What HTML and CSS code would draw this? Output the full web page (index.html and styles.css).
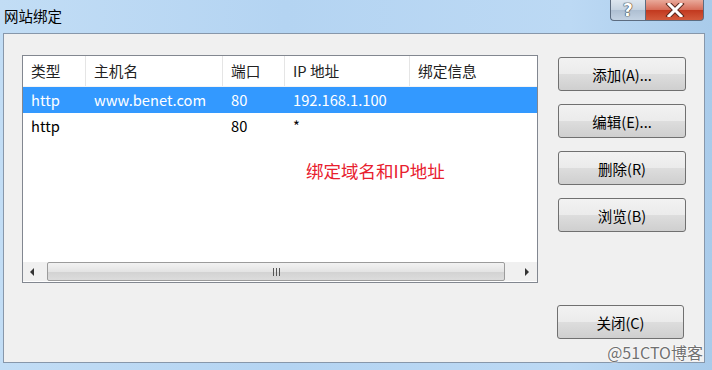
FILE: index.html
```html
<!DOCTYPE html>
<html lang="zh-cn">
<head>
    <meta charset="UTF-8">
    <title>网站绑定</title>
    <link rel="stylesheet" href="styles.css">
</head>
<body>
    <div class="janela">
        <div class="titulo">
            <span class="texto-titulo">网站绑定</span>
            <div class="controles">
                <div class="btn-ajuda">?</div>
                <div class="btn-fechar">
                    <svg width="22" height="14" viewBox="0 0 22 14">
                        <path d="M5 1 L17 13 M17 1 L5 13" stroke="#5a2a20" stroke-width="5" stroke-linecap="square"/>
                        <path d="M5 1 L17 13 M17 1 L5 13" stroke="#ffffff" stroke-width="3" stroke-linecap="square"/>
                    </svg>
                </div>
            </div>
        </div>
        <div class="cliente">
            <div class="lista">
                <div class="cabecalho">
                    <div class="col c1">类型</div>
                    <div class="col c2">主机名</div>
                    <div class="col c3">端口</div>
                    <div class="col c4">IP 地址</div>
                    <div class="col c5">绑定信息</div>
                </div>
                <div class="linha selecionada">
                    <div class="col c1">http</div>
                    <div class="col c2">www.benet.com</div>
                    <div class="col c3">80</div>
                    <div class="col c4">192.168.1.100</div>
                    <div class="col c5"></div>
                </div>
                <div class="linha">
                    <div class="col c1">http</div>
                    <div class="col c2"></div>
                    <div class="col c3">80</div>
                    <div class="col c4">*</div>
                    <div class="col c5"></div>
                </div>
                <div class="corpo">
                    <span class="nota">绑定域名和IP地址</span>
                </div>
                <div class="rolagem">
                    <div class="seta esq">
                        <svg width="6" height="8" viewBox="0 0 6 8"><path d="M5 0 L1 4 L5 8 Z" fill="#333"/></svg>
                    </div>
                    <div class="trilho">
                        <div class="polegar"><span class="grip"></span></div>
                    </div>
                    <div class="seta dir">
                        <svg width="6" height="8" viewBox="0 0 6 8"><path d="M1 0 L5 4 L1 8 Z" fill="#333"/></svg>
                    </div>
                </div>
            </div>
            <div class="botoes">
                <button>添加(A)...</button>
                <button>编辑(E)...</button>
                <button>删除(R)</button>
                <button>浏览(B)</button>
                <button class="fechar">关闭(C)</button>
            </div>
        </div>
        <span class="marca">@51CTO博客</span>
    </div>
</body>
</html>
```

FILE: styles.css
```css
*{
    box-sizing: border-box;
    margin: 0;
    padding: 0;
}
body{
    width: 712px;
    height: 370px;
    overflow: hidden;
    background: linear-gradient(90deg, #c2ddf5, #b4d4f2 40%, #bcd9f4 80%, #a9cbea);
    font-family: "Noto Sans CJK SC", "Noto Sans", sans-serif;
}
.janela{
    position: relative;
    width: 712px;
    height: 370px;
}
.titulo{
    height: 33px;
    display: flex;
    justify-content: space-between;
    align-items: flex-start;
    padding-left: 4px;
}
.texto-titulo{
    font-size: 14.5px;
    line-height: 14px;
    margin-top: 9px;
    color: #000;
}
.controles{
    display: flex;
    margin-right: 8px;
}
.btn-ajuda, .btn-fechar{
    height: 21px;
    border: 1px solid #5c6c80;
    border-top: none;
    display: flex;
    align-items: center;
    justify-content: center;
}
.btn-ajuda{
    width: 35px;
    border-radius: 0 0 0 4px;
    border-right: none;
    background: linear-gradient(#dde6ef, #c5d3e1 50%, #aebfd2 51%, #c3d2e2);
    color: #fff;
    font-family: "DejaVu Sans", sans-serif;
    font-weight: bold;
    font-size: 17px;
    text-shadow: 0 0 1px #333, 0 0 1px #333, 0 0 1px #333;
}
.btn-fechar{
    width: 59px;
    border-radius: 0 0 4px 0;
    background: linear-gradient(#e9a99a, #d66c58 50%, #c2391f 51%, #d35a3c);
}
.cliente{
    margin-left: 3px;
    width: 702px;
    height: 330px;
    border: 1px solid #8797aa;
    background-color: #f0f0f0;
    display: flex;
    padding: 21px 0 0 18px;
}
.lista{
    width: 516px;
    height: 228px;
    border: 1px solid #828790;
    background-color: #fff;
    display: flex;
    flex-direction: column;
    font-size: 14.7px;
}
.cabecalho, .linha{
    display: flex;
}
.cabecalho{
    height: 31px;
    color: #222;
    border-bottom: 1px solid #f4f4f4;
}
.cabecalho .col{
    border-right: 1px solid #e5e5e5;
    line-height: 30px;
}
.linha{
    height: 26px;
    line-height: 26px;
    color: #000;
}
.selecionada{
    background-color: #3399ff;
    color: #fff;
}
.col{
    padding-left: 8px;
    white-space: nowrap;
}
.c1{ width: 63px; }
.c2{ width: 137px; }
.c3{ width: 62px; }
.c4{ width: 125px; }
.c5{ width: 127px; border-right: none !important; }
.corpo{
    flex: 1;
    padding: 20px 0 0 283px;
}
.nota{
    color: #e8202e;
    font-size: 17.5px;
    line-height: 24px;
}
.rolagem{
    height: 19px;
    margin-bottom: 1px;
    display: flex;
    background-color: #f0f0f0;
}
.seta{
    display: flex;
    align-items: center;
    justify-content: center;
}
.esq{
    width: 24px;
    padding-right: 6px;
}
.dir{
    width: 22px;
    padding-left: 2px;
}
.trilho{
    flex: 1;
    padding-right: 10px;
}
.polegar{
    height: 19px;
    border: 1px solid #9b9b9b;
    border-radius: 2px;
    background: linear-gradient(#f2f2f2, #e4e4e4 50%, #d2d2d2 51%, #dcdcdc);
    display: flex;
    align-items: center;
    justify-content: center;
}
.grip{
    width: 7px;
    height: 8px;
    border-left: 1px solid #555;
    border-right: 1px solid #555;
    background: linear-gradient(90deg, transparent 2px, #555 2px, #555 3px, transparent 3px);
}
.botoes{
    display: flex;
    flex-direction: column;
    margin-left: 20px;
    padding-top: 2px;
    gap: 13px;
}
button{
    width: 128px;
    height: 34px;
    border: 1px solid #707070;
    border-radius: 3px;
    background: linear-gradient(#f2f2f2, #ebebeb 50%, #dddddd 51%, #cfcfcf);
    font-family: "Noto Sans CJK SC", "Noto Sans", sans-serif;
    font-size: 14.5px;
    color: #000;
}
button.fechar{
    margin-top: 60px;
    width: 127px;
    margin-left: -1px;
}
.marca{
    position: absolute;
    right: 9px;
    top: 343px;
    font-size: 16px;
    line-height: 19px;
    color: #707070;
    text-shadow: 0 0 2px #fff, 0 0 2px #fff, 0 0 1px #fff;
}
```
